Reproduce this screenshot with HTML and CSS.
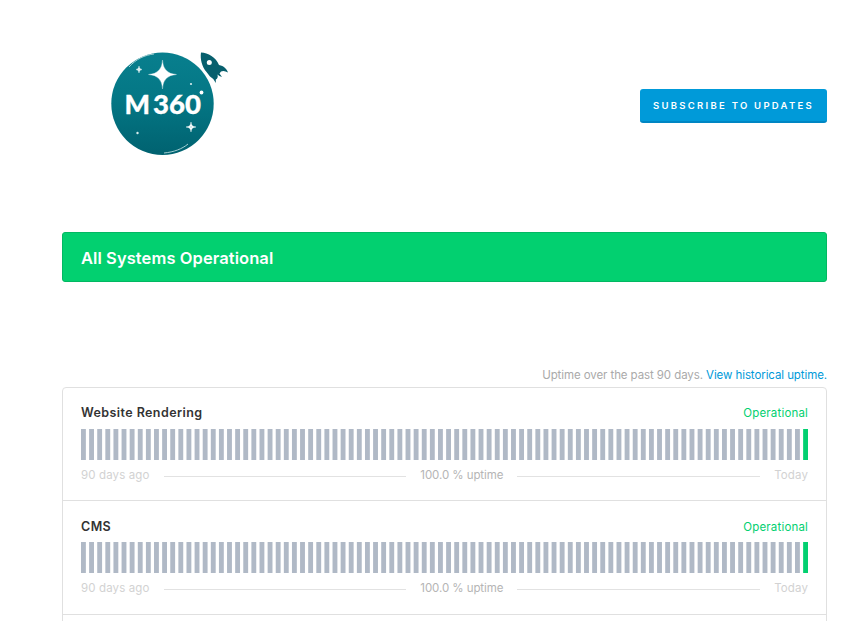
FILE: index.html
```html
<!DOCTYPE html>
<html lang="en">
<head>
<meta charset="utf-8">
<title>M360 Status</title>
<link rel="stylesheet" href="styles.css">
</head>
<body>
<div class="page">
  <header class="masthead">
    <svg class="logo" viewBox="0 0 140 125" role="img" aria-label="M360">
      <defs>
        <linearGradient id="planet" x1="0" y1="0" x2="0" y2="1"><stop offset="0" stop-color="#087f8e"/><stop offset=".45" stop-color="#047785"/><stop offset="1" stop-color="#006270"/></linearGradient>
      </defs>
      <circle cx="62.5" cy="63.7" r="51.2" fill="url(#planet)"/>
      <path d="M29 27C36 19 45 15 54 14M64 113C74 112 82 109 88 104" fill="none" stroke="#b5dadd" stroke-width=".9"/>
      <path d="M62.500 20Q62.900 33.700 76.500 34.500Q62.900 35.300 62.500 49Q62.100 35.300 48.500 34.500Q62.100 33.700 62.500 20Z" fill="#fff" stroke="#fff" stroke-width=".3"/>
      <circle cx="62.500" cy="34.500" r="2.600" fill="#fff"/>
      <path d="M39 26Q39.200 29.300 42 29.500Q39.200 29.700 39 33Q38.800 29.700 36 29.500Q38.800 29.300 39 26ZM91 82Q91.200 86.800 96 87Q91.200 87.200 91 92Q90.800 87.200 86 87Q90.800 86.800 91 82Z" fill="#fff" stroke="#fff" stroke-width=".4"/>
      <g fill="#d7eced"><circle cx="39" cy="29.500" r="1.300"/><circle cx="91" cy="87" r="1.300"/><circle cx="91" cy="44" r="1.100"/><circle cx="37.500" cy="93" r="1.200"/></g>
      <circle cx="101.500" cy="52.500" r="1.900" fill="#fff"/>
      <text class="logo-text" x="24.500" y="74.300" textLength="25.500" lengthAdjust="spacingAndGlyphs">M</text>
      <text class="logo-text" x="53" y="74.300" textLength="48" lengthAdjust="spacingAndGlyphs">360</text>
      <path d="M101 12.500C108 13 116 17 119 25C124 26 126.500 28.500 128 32.500Q124 30 121 31.500L119.500 33.500L122 37Q119 36 117.500 34.500Q118.500 38 115.800 39.500L115.800 43Q114 38.500 110 36.500L106.500 32C102 27 100 19 101 12.500Z" fill="#075f6d"/>
      <circle cx="109.300" cy="22.500" r="2.500" fill="#fff"/>
    </svg>
    <a class="subscribe" href="#"><span>Subscribe to updates</span></a>
  </header>
  <div class="banner">All Systems Operational</div>
  <p class="history">Uptime over the past 90 days. <a href="#">View historical uptime.</a></p>
  <main class="components">
    <section class="component">
      <div class="heading"><span class="name">Website Rendering</span><span class="state">Operational</span></div>
      <svg class="days" viewBox="0 0 448 34" preserveAspectRatio="none" aria-hidden="true">
        <path class="past" d="M0 17H445"/><path class="today" d="M445 17H448"/>
      </svg>
      <div class="legend"><span class="start">90 days ago</span><i></i><span class="percent">100.0 % uptime</span><i></i><span class="end">Today</span></div>
    </section>
    <section class="component second">
      <div class="heading"><span class="name">CMS</span><span class="state">Operational</span></div>
      <svg class="days" viewBox="0 0 448 34" preserveAspectRatio="none" aria-hidden="true">
        <path class="past" d="M0 17H445"/><path class="today" d="M445 17H448"/>
      </svg>
      <div class="legend"><span class="start">90 days ago</span><i></i><span class="percent">100.0 % uptime</span><i></i><span class="end">Today</span></div>
    </section>
    <section class="component"></section>
  </main>
</div>
</body>
</html>
```
FILE: styles.css
```css
* { box-sizing: border-box; }
html { overflow: hidden; }
body { margin: 0; background: #fff; color: #333; font-family: Inter, "Liberation Sans", sans-serif; font-size: 11.5px; }
a { text-decoration: none; }
.page { width: 765px; height: 621px; margin-left: 62px; padding-top: 40px; overflow: hidden; }
.masthead { display: flex; justify-content: space-between; height: 192px; }
.logo { width: 140px; height: 125px; margin-left: 38px; }
.logo-text { font: 900 27px Lato, sans-serif; fill: #fff; stroke: #fff; stroke-width: .3px; }
.subscribe { display: flex; align-items: center; justify-content: center; width: 187px; height: 34px; margin-top: 49px; border-radius: 3px; background: #009ad9; border-bottom: 2px solid #0086c3; color: #fff; font-size: 9.5px; font-weight: 600; letter-spacing: 2.27px; text-transform: uppercase; white-space: nowrap; }
.banner { display: flex; align-items: center; height: 50px; padding: 2px 18px 0; border: 1px solid #02b862; border-radius: 3px; background: #02d070; color: #fff; font-size: 16.5px; font-weight: 600; letter-spacing: .08px; }
.history { height: 20px; margin: 85px 0 0; line-height: 16px; color: #aaa; text-align: right; letter-spacing: -.09px; white-space: nowrap; }
.history a { color: #009ad9; }
.components { border: 1px solid #e0e0e0; border-radius: 4px; height: 300px; }
.component { height: 113px; padding: 15px 18px 0; border-bottom: 1px solid #e0e0e0; }
.second { height: 114px; }
.heading { display: flex; justify-content: space-between; height: 26px; line-height: 20px; }
.second .heading { padding-top: 1px; }
.name { font-size: 12.5px; font-weight: 600; letter-spacing: .42px; }
.state { letter-spacing: .17px; color: #02d070; }
.days { display: block; width: 727px; height: 31px; }
.past, .today { fill: none; stroke: #b0b9c6; stroke-width: 34; }
.past { stroke-dasharray: 3 2; }
.today { stroke: #02d070; }
.legend { display: flex; align-items: center; height: 20px; margin-top: 5px; color: #d2d2d2; letter-spacing: .13px; white-space: nowrap; }
.legend i { flex: 1; height: 1px; margin: 3px 14px 0; background: #e2e2e2; }
.percent { color: #b5b5b5; letter-spacing: -.07px; }
```
